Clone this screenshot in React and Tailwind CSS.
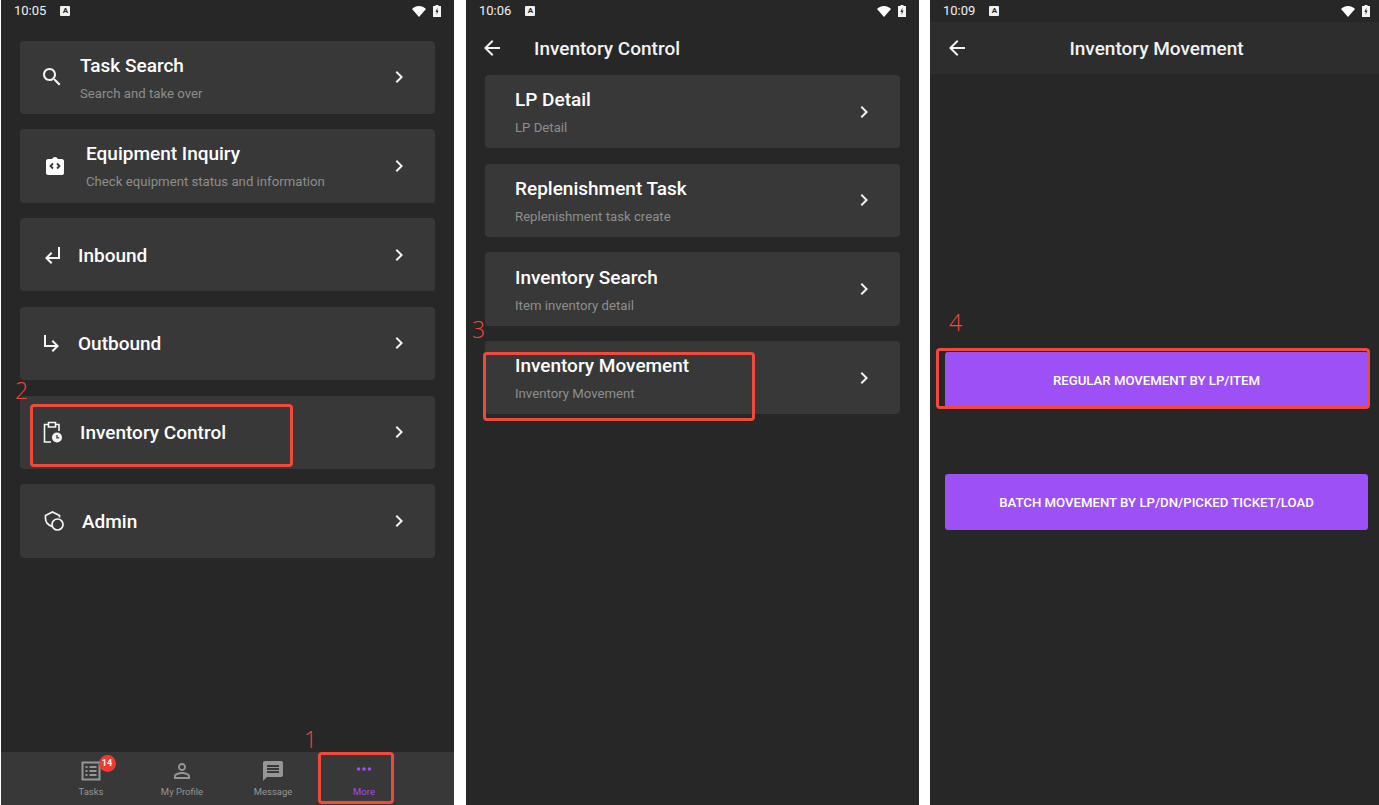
import React from 'react';

const font = { fontFamily: 'Roboto, "Noto Sans", sans-serif' };

const Chevron = () => (
  <svg width="24" height="24" viewBox="0 0 24 24" fill="#f2f2f2">
    <path d="M10 6L8.59 7.41 13.17 12l-4.58 4.59L10 18l6-6z" />
  </svg>
);

const BackArrow = () => (
  <svg width="24" height="24" viewBox="0 0 24 24" fill="#f2f2f2">
    <path d="M20 11H7.83l5.59-5.59L12 4l-8 8 8 8 1.41-1.41L7.83 13H20v-2z" />
  </svg>
);

const SearchIcon = () => (
  <svg width="24" height="24" viewBox="0 0 24 24" fill="#f5f5f5">
    <path d="M15.5 14h-.79l-.28-.27C15.41 12.59 16 11.11 16 9.5 16 5.91 13.09 3 9.5 3S3 5.91 3 9.5 5.91 16 9.5 16c1.61 0 3.09-.59 4.23-1.57l.27.28v.79l5 4.99L20.49 19l-4.99-5zm-6 0C7.01 14 5 11.99 5 9.5S7.01 5 9.5 5 14 7.01 14 9.5 11.99 14 9.5 14z" />
  </svg>
);

const EquipmentIcon = () => (
  <svg width="24" height="24" viewBox="0 0 24 24">
    <path fill="#fff" d="M5 5h4.2C9.6 3.8 10.7 3 12 3s2.4.8 2.8 2H19c1 0 2 1 2 2v12c0 1-1 2-2 2H5c-1 0-2-1-2-2V7c0-1 1-2 2-2z" />
    <path fill="none" stroke="#383838" strokeWidth="1.8" d="M10 9.5L7.5 12l2.5 2.5M14 9.5l2.5 2.5-2.5 2.5" />
  </svg>
);

const InboundIcon = () => (
  <svg width="24" height="24" viewBox="0 0 24 24" fill="#f5f5f5">
    <path d="M11 9l1.42 1.42L8.83 14H18V4h2v12H8.83l3.59 3.58L11 21l-6-6 6-6z" />
  </svg>
);

const OutboundIcon = () => (
  <svg width="24" height="24" viewBox="0 0 24 24" fill="#f5f5f5">
    <path d="M19 15l-6 6-1.42-1.42L15.17 16H4V4h2v10h9.17l-3.59-3.58L13 9l6 6z" />
  </svg>
);

const InventoryIcon = () => (
  <svg width="24" height="24" viewBox="0 0 24 24">
    <path fill="none" stroke="#f5f5f5" strokeWidth="1.6" d="M11 22H4.500V4.500H8.500M15.500 4.500h3.500v6.500" />
    <path fill="none" stroke="#f5f5f5" strokeWidth="1.6" d="M8.500 2.500h7V7h-7z" />
    <circle cx="17" cy="17.500" r="5" fill="#f5f5f5" />
    <path fill="none" stroke="#383838" strokeWidth="1.3" d="M17 15V17.800h2.300" />
  </svg>
);

const AdminIcon = () => (
  <svg width="24" height="24" viewBox="0 0 24 24" fill="none" stroke="#f5f5f5" strokeWidth="1.7">
    <path d="M10 17.500c-3-1.200-6.500-3.800-6.500-8V6.500L10.500 3 17.500 6.500v2" />
    <circle cx="15.500" cy="15.500" r="5.500" />
  </svg>
);

const TasksIcon = () => (
  <svg width="24" height="24" viewBox="0 0 24 24" fill="none" stroke="#969696" strokeWidth="2">
    <path d="M3.500 3.500h17v17h-17z" />
    <path d="M6.500 8h2M10.500 8h7M6.500 12h2M10.500 12h7M6.500 16h2M10.500 16h7" />
  </svg>
);

const ProfileIcon = () => (
  <svg width="24" height="24" viewBox="0 0 24 24" fill="#969696">
    <path d="M12 5.900c1.160 0 2.100.94 2.100 2.100s-.94 2.100-2.100 2.100S9.900 9.160 9.900 8s.94-2.100 2.100-2.100m0 9c2.970 0 6.100 1.460 6.100 2.100v1.100H5.900V17c0-.64 3.130-2.100 6.100-2.100M12 4C9.790 4 8 5.790 8 8s1.790 4 4 4 4-1.790 4-4-1.790-4-4-4zm0 9c-2.670 0-8 1.340-8 4v3h16v-3c0-2.660-5.330-4-8-4z" />
  </svg>
);

const MessageIcon = () => (
  <svg width="24" height="24" viewBox="0 0 24 24" fill="#969696">
    <path d="M20 2H4c-1.100 0-1.990.9-1.990 2L2 22l4-4h14c1.100 0 2-.9 2-2V4c0-1.100-.9-2-2-2zm-2 12H6v-2h12v2zm0-3H6V9h12v2zm0-3H6V6h12v2z" />
  </svg>
);

const MoreIcon = () => (
  <svg width="24" height="24" viewBox="0 0 24 24" fill="#9c50f0">
    <circle cx="6.500" cy="10" r="1.800" />
    <circle cx="12" cy="10" r="1.800" />
    <circle cx="17.500" cy="10" r="1.800" />
  </svg>
);

function StatusBar({ time }) {
  return (
    <div className="h-[22px] flex items-center text-[#f0f0f0] bg-[#272727]">
      <span className="ml-[13px] text-[13px] leading-[20px]">{time}</span>
      <span className="ml-[14px] w-[10px] h-[10px] rounded-[1px] bg-[#f0f0f0] text-[#272727] text-[8px] leading-[10px] font-bold text-center">A</span>
      <svg className="ml-auto" width="14" height="11" viewBox="0 0 14 11" fill="#fff">
        <path d="M0 3C2 1.200 4.500 0 7 0s5 1.200 7 3L7 11z" />
      </svg>
      <svg className="ml-[7px] mr-[13px]" width="8" height="12" viewBox="0 0 8 12">
        <path fill="#f5f5f5" d="M2.500 0h3v1H8v11H0V1h2.500z" />
        <path fill="#272727" d="M4.500 2.500L2.500 7h1.300l-.3 3 2-4.500H4.200z" />
      </svg>
    </div>
  );
}

function MenuCard({ title, subtitle, icon, iconClass, textClass }) {
  return (
    <div className="h-[73.25px] shrink-0 rounded-[4px] bg-[#383838] flex items-center pr-[24px]">
      {icon ? <div className={iconClass}>{icon}</div> : null}
      <div className={`flex-1 pt-[2px] ${textClass}`}>
        <div className="text-[19px] leading-[24px] font-medium text-white">{title}</div>
        {subtitle ? <div className="mt-[7px] text-[13.2px] leading-[18px] text-[#8e8e8e]">{subtitle}</div> : null}
      </div>
      <Chevron />
    </div>
  );
}

function NavItem({ icon, label, active, badge }) {
  return (
    <div className="relative w-[91px] flex flex-col items-center pt-[7px]">
      {icon}
      <span className={`mt-[2px] text-[9.5px] leading-[14px] ${active ? 'text-[#9c50f0]' : 'text-[#969696]'}`}>{label}</span>
      {badge ? (
        <span className="absolute left-[53px] top-[3px] w-[17px] h-[17px] rounded-full bg-[#f03a30] text-white text-[9px] leading-[17px] font-bold text-center">{badge}</span>
      ) : null}
    </div>
  );
}

const homeItems = [
  { title: 'Task Search', subtitle: 'Search and take over', icon: <SearchIcon />, iconClass: 'pl-[20px]', textClass: 'ml-[16px]' },
  { title: 'Equipment Inquiry', subtitle: 'Check equipment status and information', icon: <EquipmentIcon />, iconClass: 'pl-[23px]', textClass: 'ml-[19px]' },
  { title: 'Inbound', icon: <InboundIcon />, iconClass: 'pl-[20px]', textClass: 'ml-[14px]' },
  { title: 'Outbound', icon: <OutboundIcon />, iconClass: 'pl-[20px]', textClass: 'ml-[14px]' },
  { title: 'Inventory Control', icon: <InventoryIcon />, iconClass: 'pl-[20px]', textClass: 'ml-[16px]' },
  { title: 'Admin', icon: <AdminIcon />, iconClass: 'pl-[22px]', textClass: 'ml-[16px]' },
];

const controlItems = [
  { title: 'LP Detail', subtitle: 'LP Detail' },
  { title: 'Replenishment Task', subtitle: 'Replenishment task create' },
  { title: 'Inventory Search', subtitle: 'Item inventory detail' },
  { title: 'Inventory Movement', subtitle: 'Inventory Movement' },
];

export default function App() {
  return (
    <div className="relative w-[1379px] h-[805px] overflow-hidden bg-white flex pl-px" style={font}>
      {/* first phone: home menu */}
      <div className="w-[453px] h-[805px] shrink-0 bg-[#272727] flex flex-col">
        <StatusBar time="10:05" />
        <div className="flex-1 px-[19px] pt-[18.6px] flex flex-col gap-[15.5px]">
          {homeItems.map((item) => (
            <MenuCard key={item.title} {...item} />
          ))}
        </div>
        <div className="h-[53px] bg-[#383838] flex justify-center">
          <NavItem icon={<TasksIcon />} label="Tasks" badge="14" />
          <NavItem icon={<ProfileIcon />} label="My Profile" />
          <NavItem icon={<MessageIcon />} label="Message" />
          <NavItem icon={<MoreIcon />} label="More" active />
        </div>
      </div>

      {/* second phone: inventory control */}
      <div className="ml-[12px] w-[453px] h-[805px] shrink-0 bg-[#272727] flex flex-col">
        <StatusBar time="10:06" />
        <div className="h-[52.9px] flex items-center pl-[14px]">
          <BackArrow />
          <span className="ml-[30px] pt-[2px] text-[19px] font-medium text-[#f2f2f2]">Inventory Control</span>
        </div>
        <div className="px-[19px] flex flex-col gap-[15.5px]">
          {controlItems.map((item) => (
            <MenuCard key={item.title} {...item} textClass="ml-[30px]" />
          ))}
        </div>
      </div>

      {/* third phone: runs past the right edge of the shot */}
      <div className="ml-[11px] w-[453px] h-[805px] shrink-0 bg-[#272727] flex flex-col">
        <StatusBar time="10:09" />
        <div className="relative h-[52px] bg-[#2d2d2d] flex items-center justify-center">
          <div className="absolute left-[15px] top-[14px]">
            <BackArrow />
          </div>
          <span className="pt-[2px] text-[19px] font-medium text-[#f2f2f2]">Inventory Movement</span>
        </div>
        <div className="px-[15px] pt-[278px] flex flex-col gap-[66px]">
          <div className="h-[56px] pt-px rounded-[3px] bg-[#9c50f6] text-white text-[13.2px] font-medium flex items-center justify-center">REGULAR MOVEMENT BY LP/ITEM</div>
          <div className="h-[56px] pt-px rounded-[3px] bg-[#9c50f6] text-white text-[13.2px] font-medium flex items-center justify-center">BATCH MOVEMENT BY LP/DN/PICKED TICKET/LOAD</div>
        </div>
      </div>

      {/* red annotations drawn over the screenshots */}
      <div className="absolute left-[30px] top-[404px] w-[263px] h-[63px] border-[3px] border-[#ef4a3c] rounded-[4px]" />
      <div className="absolute left-[318px] top-[752px] w-[76px] h-[52px] border-[3px] border-[#ef4a3c] rounded-[4px]" />
      <div className="absolute left-[483px] top-[352px] w-[272px] h-[69px] border-[3px] border-[#ef4a3c] rounded-[4px]" />
      <div className="absolute left-[936px] top-[348px] w-[434px] h-[61px] border-[3px] border-[#ef4a3c] rounded-[4px]" />
      <span className="absolute left-[304px] top-[725px] text-[23px] leading-[28px] font-light text-[#ef4a3c]" style={{ fontFamily: '"Open Sans", sans-serif' }}>1</span>
      <span className="absolute left-[15px] top-[376px] text-[23px] leading-[28px] font-light text-[#ef4a3c]" style={{ fontFamily: '"Open Sans", sans-serif' }}>2</span>
      <span className="absolute left-[472px] top-[315px] text-[23px] leading-[28px] font-light text-[#ef4a3c]" style={{ fontFamily: '"Open Sans", sans-serif' }}>3</span>
      <span className="absolute left-[949px] top-[308px] text-[23px] leading-[28px] font-light text-[#ef4a3c]" style={{ fontFamily: '"Open Sans", sans-serif' }}>4</span>
    </div>
  );
}
